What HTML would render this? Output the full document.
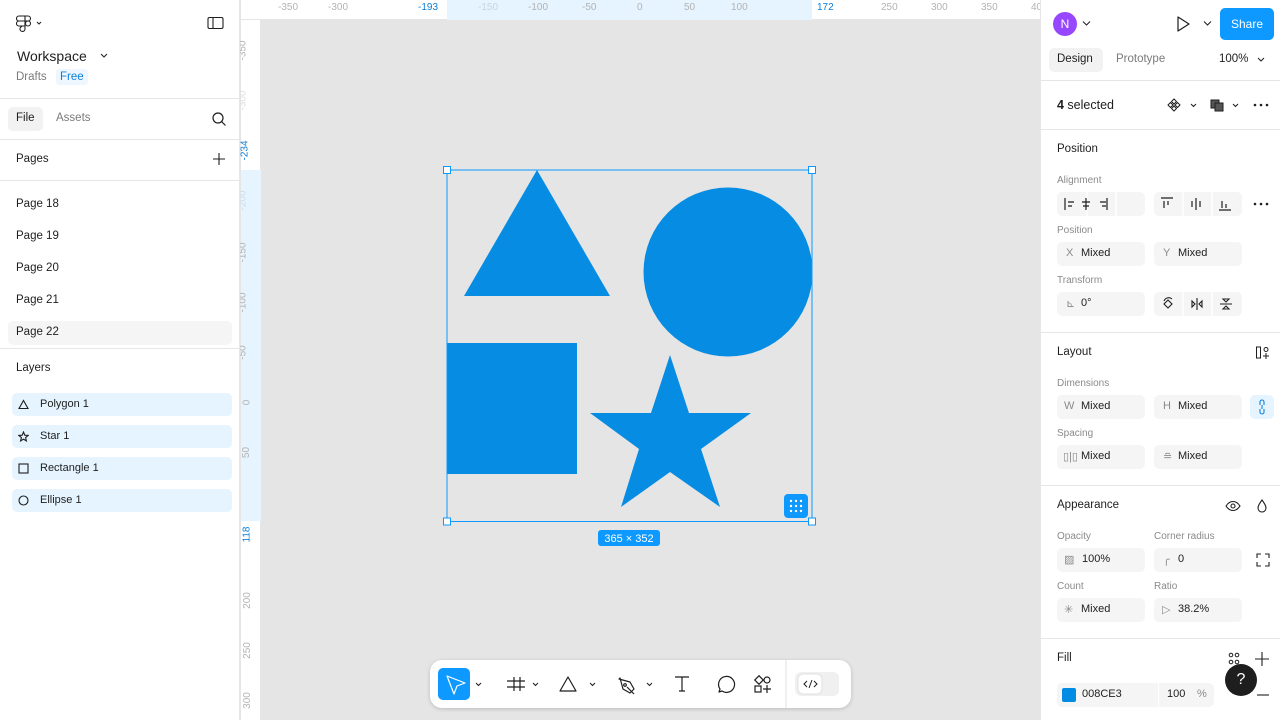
<!DOCTYPE html>
<html><head><meta charset="utf-8"><style>
*{box-sizing:border-box;margin:0;padding:0}
body{width:1280px;height:720px;overflow:hidden;font-family:"Liberation Sans",sans-serif;font-size:11px;color:#1e1e1e;background:#e5e5e5;position:relative}
.a{position:absolute}
.lp{left:0;top:0;width:240px;height:720px;background:#fff;border-right:1px solid #e6e6e6}
.rp{left:1040px;top:0;width:240px;height:720px;background:#fff;border-left:1px solid #e6e6e6}
.hr{height:1px;background:#e6e6e6;left:0;right:0}
.rul{color:#b3b3b3;font-size:10px}
.lay{left:12px;width:220px;height:23px;background:#e5f4ff;border-radius:5px}
.lay span{position:absolute;left:28px;top:5px;font-size:11px}
.fld{background:#f5f5f5;border-radius:5px;height:24px}
.fld span{position:absolute;top:5px;font-size:11px}
.lbl{color:#8a8a8a;font-size:10px}
.h{font-size:11.5px;font-weight:normal}
.seg{background:#f5f5f5;border-radius:5px;height:24px}
</style></head><body>
<!-- canvas rulers -->
<div class="a" style="left:241px;top:0;width:799px;height:20px;background:#fff;border-bottom:1px solid #e6e6e6"></div>
<div class="a" style="left:447px;top:0;width:365px;height:20px;background:#e5f4ff"></div>
<div class="a" style="left:241px;top:20px;width:20px;height:700px;background:#fff;border-right:1px solid #e6e6e6"></div>
<div class="a" style="left:241px;top:170px;width:20px;height:351px;background:#e5f4ff"></div>
<div class="a rul" style="left:278px;top:2px">-350</div>
<div class="a rul" style="left:328px;top:2px">-300</div>
<div class="a" style="left:418px;top:2px;font-size:10px;color:#0d7fd8">-193</div>
<div class="a rul" style="left:478px;top:2px;color:#c5d6e3">-150</div>
<div class="a rul" style="left:528px;top:2px">-100</div>
<div class="a rul" style="left:582px;top:2px">-50</div>
<div class="a rul" style="left:637px;top:2px">0</div>
<div class="a rul" style="left:684px;top:2px">50</div>
<div class="a rul" style="left:731px;top:2px">100</div>
<div class="a" style="left:817px;top:2px;font-size:10px;color:#0d7fd8">172</div>
<div class="a rul" style="left:881px;top:2px">250</div>
<div class="a rul" style="left:931px;top:2px">300</div>
<div class="a rul" style="left:981px;top:2px">350</div>
<div class="a rul" style="left:1031px;top:2px">400</div>
<div class="a" style="left:241px;top:20px;width:20px;height:700px">
<div class="a rul" style="left:-8px;top:25px;transform:rotate(-90deg)">-350</div>
<div class="a rul" style="left:-8px;top:75px;transform:rotate(-90deg);color:#ddd">-300</div>
<div class="a" style="left:-6px;top:125px;transform:rotate(-90deg);font-size:10px;color:#0d7fd8">-234</div>
<div class="a rul" style="left:-8px;top:175px;transform:rotate(-90deg);color:#cfdde8">-200</div>
<div class="a rul" style="left:-8px;top:227px;transform:rotate(-90deg)">-150</div>
<div class="a rul" style="left:-8px;top:277px;transform:rotate(-90deg)">-100</div>
<div class="a rul" style="left:-5px;top:327px;transform:rotate(-90deg)">-50</div>
<div class="a rul" style="left:3px;top:377px;transform:rotate(-90deg)">0</div>
<div class="a rul" style="left:0px;top:427px;transform:rotate(-90deg)">50</div>
<div class="a" style="left:-2px;top:509px;transform:rotate(-90deg);font-size:10px;color:#0d7fd8">118</div>
<div class="a rul" style="left:-2px;top:575px;transform:rotate(-90deg)">200</div>
<div class="a rul" style="left:-2px;top:625px;transform:rotate(-90deg)">250</div>
<div class="a rul" style="left:-2px;top:675px;transform:rotate(-90deg)">300</div>
</div>
<!-- shapes -->
<svg class="a" style="left:0;top:0" width="1040" height="720">
<polygon points="537,170 610,296 464,296" fill="#068ce3"/>
<circle cx="728" cy="272" r="84.5" fill="#068ce3"/>
<rect x="447" y="343" width="130" height="131" fill="#068ce3"/>
<polygon points="670,355 689,413 751,413 701,449 720,507 670,472 621,507 639,449 590,413 651,413" fill="#068ce3"/>
<rect x="447" y="170" width="365" height="351.5" fill="none" stroke="#0d99ff" stroke-width="1"/>
<g fill="#fff" stroke="#0d99ff"><rect x="443.5" y="166.5" width="7" height="7"/><rect x="808.5" y="166.5" width="7" height="7"/><rect x="443.5" y="518" width="7" height="7"/><rect x="808.5" y="518" width="7" height="7"/></g>
<rect x="784" y="494" width="24" height="24" rx="4" fill="#0d99ff"/>
<g fill="#fff"><circle cx="791" cy="501" r="1.2"/><circle cx="796" cy="501" r="1.2"/><circle cx="801" cy="501" r="1.2"/><circle cx="791" cy="506" r="1.2"/><circle cx="796" cy="506" r="1.2"/><circle cx="801" cy="506" r="1.2"/><circle cx="791" cy="511" r="1.2"/><circle cx="796" cy="511" r="1.2"/><circle cx="801" cy="511" r="1.2"/></g>
<rect x="598" y="530" width="62" height="16" rx="3" fill="#0d99ff"/>
<text x="629" y="542" font-size="11" fill="#fff" text-anchor="middle" font-family="Liberation Sans">365 × 352</text>
</svg>
<!-- toolbar -->
<div class="a" style="left:430px;top:660px;width:421px;height:48px;background:#fff;border-radius:12px;box-shadow:0 1px 4px rgba(0,0,0,.18)"></div>
<div class="a" style="left:438px;top:668px;width:32px;height:32px;background:#0d99ff;border-radius:5px"></div>
<svg class="a" style="left:430px;top:660px" width="421" height="48" fill="none" stroke="#1e1e1e" stroke-width="1.2">
<path d="M17 16 L35 23 L27 26 L24 34 Z" stroke="#fff" stroke-linejoin="round"/>
<path d="M46 23l2.5 2.5 2.5-2.5M103 23l2.5 2.5 2.5-2.5M160 23l2.5 2.5 2.5-2.5M217 23l2.5 2.5 2.5-2.5" stroke-width="1"/>
<path d="M84 17v14M90 17v14M77 21h18M77 27h18"/>
<path d="M138 17l-8 14h16z" stroke-linejoin="round"/>
<path d="M189 19l11 3 4 7-4 4-7-4-3-11z M197 27l7 7" stroke-linejoin="round"/><circle cx="195" cy="25" r="1.3"/>
<path d="M245 17h14M252 17v14M249 31h6"/>
<path d="M292 31l-3 1 1-3a8 8 0 1 1 2 2z" stroke-linejoin="round"/>
<rect x="326" y="17" width="6" height="6" transform="rotate(45 329 20) translate(0 0)"/><circle cx="337" cy="20" r="3"/><rect x="325" y="26" width="6" height="6"/><path d="M337 25v8M333 29h8"/>
<path d="M356 0v48" stroke="#e6e6e6"/>
<rect x="365" y="12" width="44" height="24" rx="6" fill="#f0f0f0" stroke="none"/>
<rect x="368" y="14" width="24" height="20" rx="5" fill="#fff" stroke="#e0e0e0" stroke-width="1"/>
<path d="M377 21l-3 3 3 3M384 21l3 3-3 3M382 20l-3 8" stroke-width="1"/>
</svg>
<!-- left panel -->
<div class="a lp">
<svg class="a" style="left:16px;top:14px" width="30" height="20" fill="none" stroke="#1e1e1e" stroke-width="1.1"><path d="M3 2h6v5H3a2.5 2.5 0 0 1 0-5zM9 2h3a2.5 2.5 0 0 1 0 5H9zM3 7h6v5H3a2.5 2.5 0 0 1 0-5zM9 12v3a2.5 2.5 0 1 1-3-2.5M3 12h6"/><circle cx="12" cy="9.5" r="2.5"/><path d="M21 8l2 2 2-2" stroke-width="1"/></svg>
<svg class="a" style="left:207px;top:16px" width="18" height="15" fill="none" stroke="#1e1e1e" stroke-width="1.1"><rect x="1" y="1.5" width="15" height="11" rx="1.5"/><path d="M6 1.5v11"/></svg>
<div class="a" style="left:17px;top:48px;font-size:14px">Workspace</div>
<svg class="a" style="left:100px;top:53px" width="8" height="6" fill="none" stroke="#1e1e1e"><path d="M1 1l3 3 3-3"/></svg>
<div class="a" style="left:16px;top:71px;font-size:11.5px;color:#7a7a7a">Drafts</div>
<div class="a" style="left:56px;top:69px;padding:2px 4px;font-size:11.5px;color:#0d7fd8;background:#eef7ff;border-radius:3px">Free</div>
<div class="a hr" style="top:98px"></div>
<div class="a" style="left:8px;top:107px;width:35px;height:24px;background:#f2f2f2;border-radius:5px"></div>
<div class="a" style="left:16px;top:112px;font-size:11.5px">File</div>
<div class="a" style="left:56px;top:112px;font-size:11.5px;color:#7a7a7a">Assets</div>
<svg class="a" style="left:211px;top:111px" width="16" height="16" fill="none" stroke="#1e1e1e" stroke-width="1.2"><circle cx="7" cy="7" r="5"/><path d="M10.5 10.5l4 4"/></svg>
<div class="a hr" style="top:139px"></div>
<div class="a" style="left:16px;top:153px;font-size:11.5px">Pages</div>
<svg class="a" style="left:212px;top:152px" width="14" height="14" stroke="#1e1e1e" stroke-width="1.1"><path d="M7 1v12M1 7h12"/></svg>
<div class="a hr" style="top:180px"></div>
<div class="a" style="left:16px;top:198px;font-size:11.5px">Page 18</div>
<div class="a" style="left:16px;top:230px;font-size:11.5px">Page 19</div>
<div class="a" style="left:16px;top:262px;font-size:11.5px">Page 20</div>
<div class="a" style="left:16px;top:294px;font-size:11.5px">Page 21</div>
<div class="a" style="left:8px;top:321px;width:224px;height:24px;background:#f5f5f5;border-radius:5px"></div>
<div class="a" style="left:16px;top:326px;font-size:11.5px">Page 22</div>
<div class="a hr" style="top:348px"></div>
<div class="a" style="left:16px;top:362px;font-size:11.5px">Layers</div>
<div class="a lay" style="top:393px"><svg class="a" style="left:6px;top:6px" width="11" height="11" fill="none" stroke="#1e1e1e" stroke-width="1.1"><path d="M5.5 1.5L10 9.5H1z"/></svg><span>Polygon 1</span></div>
<div class="a lay" style="top:425px"><svg class="a" style="left:6px;top:6px" width="11" height="11" fill="none" stroke="#1e1e1e" stroke-width="1.1"><path d="M5.5 1l1.3 3.2 3.4.2-2.6 2.2.8 3.3-2.9-1.8-2.9 1.8.8-3.3L.8 4.4l3.4-.2z"/></svg><span>Star 1</span></div>
<div class="a lay" style="top:457px"><svg class="a" style="left:6px;top:6px" width="11" height="11" fill="none" stroke="#1e1e1e" stroke-width="1.1"><rect x="1" y="1" width="9" height="9"/></svg><span>Rectangle 1</span></div>
<div class="a lay" style="top:489px"><svg class="a" style="left:6px;top:6px" width="11" height="11" fill="none" stroke="#1e1e1e" stroke-width="1.1"><circle cx="5.5" cy="5.5" r="4.5"/></svg><span>Ellipse 1</span></div>
</div>
<!-- right panel -->
<div class="a rp">
<div class="a" style="left:12px;top:12px;width:24px;height:24px;border-radius:50%;background:#9747ff;color:#fff;font-size:12px;text-align:center;line-height:24px">N</div>
<svg class="a" style="left:41px;top:20px" width="9" height="7" fill="none" stroke="#1e1e1e"><path d="M1 1.5l3.5 3.5 3.5-3.5"/></svg>
<svg class="a" style="left:134px;top:15px" width="16" height="18" fill="none" stroke="#1e1e1e" stroke-width="1.2"><path d="M3 2l11 7-11 7z" stroke-linejoin="round"/></svg>
<svg class="a" style="left:162px;top:20px" width="9" height="7" fill="none" stroke="#1e1e1e"><path d="M1 1.5l3.5 3.5 3.5-3.5"/></svg>
<div class="a" style="left:179px;top:8px;width:54px;height:32px;background:#0d99ff;border-radius:5px;color:#fff;font-size:12px;text-align:center;line-height:32px">Share</div>
<div class="a" style="left:8px;top:48px;width:54px;height:24px;background:#f2f2f2;border-radius:5px"></div>
<div class="a" style="left:16px;top:53px;font-size:11.5px">Design</div>
<div class="a" style="left:75px;top:53px;font-size:11.5px;color:#7a7a7a">Prototype</div>
<div class="a" style="left:178px;top:53px;font-size:11.5px">100%</div>
<svg class="a" style="left:216px;top:57px" width="8" height="6" fill="none" stroke="#1e1e1e"><path d="M1 1l3 3 3-3"/></svg>
<div class="a hr" style="top:80px"></div>
<div class="a" style="left:16px;top:98px;font-size:12.5px"><b>4</b> selected</div>
<svg class="a" style="left:126px;top:97px" width="110" height="16" fill="none" stroke="#1e1e1e" stroke-width="1"><path d="M7 2l2.5 2.5L7 7 4.5 4.5zM7 9l2.5 2.5L7 14l-2.5-2.5zM3.5 5.5L6 8l-2.5 2.5L1 8zM10.5 5.5L13 8l-2.5 2.5L8 8z"/><path d="M24 7l2.5 2.5L29 7M66 7l2.5 2.5L71 7"/><rect x="44" y="3" width="8" height="8" fill="#555"/><rect x="48" y="6" width="8" height="8" fill="#555"/><g fill="#1e1e1e" stroke="none"><circle cx="88" cy="8" r="1.3"/><circle cx="94" cy="8" r="1.3"/><circle cx="100" cy="8" r="1.3"/></g></svg>
<div class="a hr" style="top:129px"></div>
<div class="a h" style="left:16px;top:143px">Position</div>
<div class="a lbl" style="left:16px;top:175px">Alignment</div>
<div class="a seg" style="left:16px;top:192px;width:88px"></div>
<div class="a seg" style="left:113px;top:192px;width:88px"></div>
<svg class="a" style="left:16px;top:192px" width="220" height="24" fill="none" stroke="#1e1e1e" stroke-width="1.2"><path d="M30 0v24M59 0v24M126 0v24M155 0v24" stroke="#fff" stroke-width="1.5"/><path d="M8 6v12M11 10h6M11 14h4M29 6v12M25 10h8M26 14h6M50 6v12M43 10h6M45 14h4M104 6h12M107 9v7M111 9v4M139 6v12M135 9v6M143 9v6M162 18h12M165 9v7M169 12v4"/><g fill="#1e1e1e" stroke="none"><circle cx="198" cy="12" r="1.3"/><circle cx="204" cy="12" r="1.3"/><circle cx="210" cy="12" r="1.3"/></g></svg>
<div class="a lbl" style="left:16px;top:225px">Position</div>
<div class="a fld" style="left:16px;top:242px;width:88px"><span style="left:9px;color:#8a8a8a">X</span><span style="left:24px">Mixed</span></div>
<div class="a fld" style="left:113px;top:242px;width:88px"><span style="left:9px;color:#8a8a8a">Y</span><span style="left:24px">Mixed</span></div>
<div class="a lbl" style="left:16px;top:275px">Transform</div>
<div class="a fld" style="left:16px;top:292px;width:88px"><span style="left:9px;color:#8a8a8a">⊾</span><span style="left:24px">0°</span></div>
<div class="a seg" style="left:113px;top:292px;width:88px"></div>
<svg class="a" style="left:113px;top:292px" width="88" height="24" fill="none" stroke="#1e1e1e" stroke-width="1.1"><path d="M29 0v24M58 0v24" stroke="#fff" stroke-width="1.5"/><path d="M14 8l4 4-4 4-4-4zM10 9a5 5 0 0 1 8-2"/><path d="M43 6v12M38 9v6l3-3zM48 9v6l-3-3z"/><path d="M66 12h12M69 7h6l-3 3zM69 17h6l-3-3z"/></svg>
<div class="a hr" style="top:332px"></div>
<div class="a h" style="left:16px;top:346px">Layout</div>
<svg class="a" style="left:214px;top:345px" width="16" height="16" fill="none" stroke="#1e1e1e" stroke-width="1"><rect x="1.5" y="2" width="4" height="11"/><circle cx="11" cy="4.5" r="2"/><path d="M11 8v6M8 11h6"/></svg>
<div class="a lbl" style="left:16px;top:378px">Dimensions</div>
<div class="a fld" style="left:16px;top:395px;width:88px"><span style="left:7px;color:#8a8a8a">W</span><span style="left:24px">Mixed</span></div>
<div class="a fld" style="left:113px;top:395px;width:88px"><span style="left:9px;color:#8a8a8a">H</span><span style="left:24px">Mixed</span></div>
<div class="a" style="left:209px;top:395px;width:24px;height:24px;background:#e5f4ff;border-radius:5px"></div>
<svg class="a" style="left:209px;top:395px" width="24" height="24" fill="none" stroke="#0d7fd8" stroke-width="1.1"><path d="M10 10V7a2 2 0 0 1 4 0v3M10 14v3a2 2 0 0 0 4 0v-3M12 10v4"/></svg>
<div class="a lbl" style="left:16px;top:428px">Spacing</div>
<div class="a fld" style="left:16px;top:445px;width:88px"><span style="left:6px;color:#8a8a8a">▯|▯</span><span style="left:24px">Mixed</span></div>
<div class="a fld" style="left:113px;top:445px;width:88px"><span style="left:9px;color:#8a8a8a">≘</span><span style="left:24px">Mixed</span></div>
<div class="a hr" style="top:485px"></div>
<div class="a h" style="left:16px;top:499px">Appearance</div>
<svg class="a" style="left:184px;top:498px" width="46" height="16" fill="none" stroke="#1e1e1e" stroke-width="1.1"><path d="M1 8c4-6 10-6 14 0-4 6-10 6-14 0z"/><circle cx="8" cy="8" r="2"/><path d="M37 2c-3 4-4 6-4 8a4 4 0 0 0 8 0c0-2-1-4-4-8z"/></svg>
<div class="a lbl" style="left:16px;top:531px">Opacity</div>
<div class="a lbl" style="left:113px;top:531px">Corner radius</div>
<div class="a fld" style="left:16px;top:548px;width:88px"><span style="left:7px;color:#8a8a8a">▨</span><span style="left:25px">100%</span></div>
<div class="a fld" style="left:113px;top:548px;width:88px"><span style="left:9px;color:#8a8a8a">╭</span><span style="left:24px">0</span></div>
<svg class="a" style="left:214px;top:552px" width="16" height="16" fill="none" stroke="#1e1e1e" stroke-width="1.1"><path d="M2 6V2h4M10 2h4v4M14 10v4h-4M6 14H2v-4"/></svg>
<div class="a lbl" style="left:16px;top:581px">Count</div>
<div class="a lbl" style="left:113px;top:581px">Ratio</div>
<div class="a fld" style="left:16px;top:598px;width:88px"><span style="left:7px;color:#8a8a8a">✳</span><span style="left:24px">Mixed</span></div>
<div class="a fld" style="left:113px;top:598px;width:88px"><span style="left:8px;color:#8a8a8a">▷</span><span style="left:24px">38.2%</span></div>
<div class="a hr" style="top:638px"></div>
<div class="a h" style="left:16px;top:652px">Fill</div>
<svg class="a" style="left:185px;top:651px" width="44" height="16" fill="none" stroke="#1e1e1e" stroke-width="1"><circle cx="5" cy="4" r="1.8"/><circle cx="11" cy="4" r="1.8"/><circle cx="5" cy="11" r="1.8"/><circle cx="11" cy="11" r="1.8"/><path d="M36 1v14M29 8h14" stroke-width="1.1"/></svg>
<div class="a fld" style="left:16px;top:683px;width:157px"></div>
<div class="a" style="left:117px;top:683px;width:1px;height:24px;background:#fff"></div>
<div class="a" style="left:21px;top:688px;width:14px;height:14px;background:#008ce3;border-radius:2px"></div>
<div class="a" style="left:41px;top:688px;font-size:11px">008CE3</div>
<div class="a" style="left:126px;top:688px;font-size:11px">100</div>
<div class="a" style="left:156px;top:688px;font-size:11px;color:#8a8a8a">%</div>
<svg class="a" style="left:214px;top:687px" width="16" height="16" stroke="#1e1e1e" stroke-width="1.1"><path d="M2 8h12"/></svg>
<div class="a" style="left:184px;top:664px;width:32px;height:32px;border-radius:50%;background:#1e1e1e;color:#fff;font-size:16px;text-align:center;line-height:32px">?</div>
</div>
</body></html>
